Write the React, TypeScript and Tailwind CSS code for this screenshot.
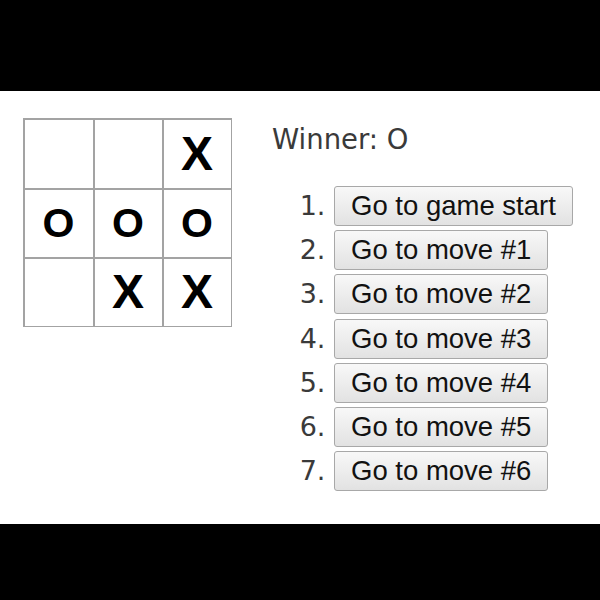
import React from 'react';

const squares: (string | null)[] = [null, null, 'X', 'O', 'O', 'O', null, 'X', 'X'];

const moves = [
  'Go to game start',
  'Go to move #1',
  'Go to move #2',
  'Go to move #3',
  'Go to move #4',
  'Go to move #5',
  'Go to move #6',
];

function Square({ value }: { value: string | null }) {
  return (
    <div className="flex items-center justify-center bg-white font-['Liberation_Sans',Arial,sans-serif] font-bold text-black">
      {value === 'X' && <span className="text-[48px] leading-none">X</span>}
      {value === 'O' && <span className="text-[41px] leading-none">O</span>}
    </div>
  );
}

export default function App() {
  return (
    <div className="flex h-[600px] w-[600px] flex-col bg-black">
      <div className="h-[91px] shrink-0" />
      <div className="flex h-[433px] shrink-0 items-start bg-white pl-[23px] pt-[27px]">
        {/* Board */}
        <div className="grid grid-cols-[68px_67px_67px] grid-rows-[68px_67px_67px] gap-[2px] bg-[#a3a3a3] p-[1.5px]">
          {squares.map((v, i) => (
            <Square key={i} value={v} />
          ))}
        </div>

        {/* Game info */}
        <div className="ml-[40px] pt-[5px] font-['DejaVu_Sans',sans-serif] text-[27.5px] text-[#3a3a3a]">
          <div className="leading-[32px]">Winner: O</div>
          <ol className="mt-[31px] list-decimal pl-[62px] text-[27px]">
            {moves.map((m, i) => (
              <li key={i} className="mt-[3.7px] first:mt-0">
                <button className="rounded-[3px] border border-[#a8a8a8] bg-linear-to-b from-[#f8f8f8] to-[#e2e2e2] px-[16px] py-[3px] font-['Liberation_Sans',Arial,sans-serif] text-[27.5px] leading-[32px] text-[#111]">
                  {m}
                </button>
              </li>
            ))}
          </ol>
        </div>
      </div>
      <div className="flex-1" />
    </div>
  );
}
